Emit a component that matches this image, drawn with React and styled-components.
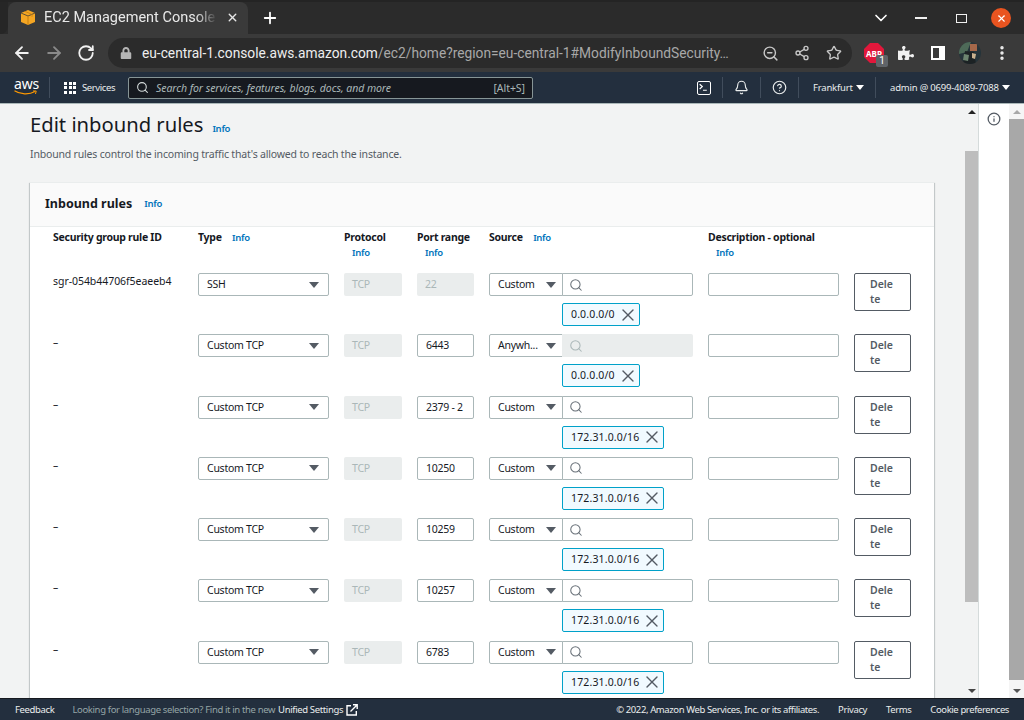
import React from "react";
import styled, { createGlobalStyle } from "styled-components";
import {
  ArrowLeft,
  ArrowRight,
  RotateCw,
  Plus,
  X,
  ChevronDown,
  Search,
  ZoomOut,
  Share2,
  Star,
  EllipsisVertical,
  Bell,
  CircleHelp,
  Info as InfoCircle,
} from "lucide-react";
import { FaPuzzlePiece, FaLock } from "react-icons/fa";

const uiFont = `"Noto Sans", "Open Sans", sans-serif`;
const chromeFont = `Roboto, "Noto Sans", sans-serif`;

const GlobalStyle = createGlobalStyle`
  html, body {
    margin: 0;
    padding: 0;
    height: 100%;
    overflow: hidden;
  }
  * {
    box-sizing: border-box;
  }
`;

const Window = styled.div`
  width: 1024px;
  height: 720px;
  display: flex;
  flex-direction: column;
  overflow: hidden;
  font-family: ${uiFont};
  background: #f2f3f3;
`;

const TabStrip = styled.div`
  height: 34px;
  flex: none;
  display: flex;
  align-items: flex-end;
  background: #2b2b2b;
  border-top: 2px solid #242424;
  color: #fff;
`;

const TabEdge = styled.div`
  width: 8px;
  height: 32px;
  background: #262626;
  border-bottom-right-radius: 8px;
`;

const Tab = styled.div`
  width: 240px;
  height: 32px;
  padding: 0 0 2px 13px;
  display: flex;
  align-items: center;
  gap: 9px;
  background: #3a3a3a;
  border-radius: 8px 8px 0 0;
  font: 14.5px ${chromeFont};
  color: #e8e8e8;
`;

const TabTitle = styled.span`
  width: 173px;
  overflow: hidden;
  white-space: nowrap;
  mask-image: linear-gradient(to right, #000 88%, transparent 100%);
`;

const TabClose = styled.span`
  display: flex;
  color: #e8e8e8;
`;

const NewTab = styled.span`
  display: flex;
  margin: 0 0 1px 13px;
  align-self: center;
`;

const WindowControls = styled.div`
  margin-left: auto;
  align-self: center;
  display: flex;
  align-items: center;
  padding-right: 3px;
`;

const WindowButton = styled.span`
  width: 40px;
  display: flex;
  justify-content: center;
  align-items: center;
`;

const CloseCircle = styled.span`
  width: 20px;
  height: 20px;
  border-radius: 50%;
  background: #e95420;
  display: flex;
  align-items: center;
  justify-content: center;
`;

const MinimizeMark = styled.span`
  width: 12px;
  height: 2px;
  background: #f0f0f0;
`;

const MaximizeMark = styled.span`
  width: 11px;
  height: 9px;
  border: 1.5px solid #f0f0f0;
`;

const Toolbar = styled.div`
  height: 38px;
  flex: none;
  display: flex;
  align-items: center;
  padding: 0 6px;
  background: #3a3a3a;
  color: #e8e8e8;
`;

const ToolButton = styled.span`
  width: 32px;
  flex: none;
  display: flex;
  justify-content: center;
  align-items: center;
  position: relative;
  color: ${(p) => (p.$dim ? "#8a8a8a" : "#f1f1f1")};
`;

const Omnibox = styled.div`
  width: 744px;
  height: 30px;
  margin: 0 6px;
  padding: 0 2px 0 11px;
  flex: none;
  display: flex;
  align-items: center;
  border-radius: 15px;
  background: #2b2b2b;
  font: 13.75px ${chromeFont};
`;

const LockSlot = styled.span`
  display: flex;
  width: 23px;
  padding-left: 1px;
  color: #b5b5b5;
`;

const UrlText = styled.div`
  flex: 1;
  min-width: 0;
  white-space: nowrap;
  color: #a8a8a8;
  b {
    font-weight: 400;
    color: #eeeeee;
  }
`;

const AbpIcon = styled.span`
  width: 20px;
  height: 20px;
  background: #e2173b;
  clip-path: polygon(30% 0, 70% 0, 100% 30%, 100% 70%, 70% 100%, 30% 100%, 0 70%, 0 30%);
  display: flex;
  align-items: center;
  justify-content: center;
  font: bold 8px ${uiFont};
  color: #fff;
`;

const AbpBadge = styled.span`
  position: absolute;
  left: 18px;
  top: 12px;
  width: 12px;
  height: 12px;
  border-radius: 2px;
  background: #5f6368;
  color: #fff;
  font: 10px/12px ${chromeFont};
  text-align: center;
`;

const SidePanelIcon = styled.span`
  width: 14px;
  height: 14px;
  background: #fff;
  border: 2px solid #fff;
  display: flex;
  justify-content: flex-start;
  span {
    width: 6px;
    height: 10px;
    background: #3a3a3a;
  }
`;

const TopNav = styled.div`
  height: 32px;
  flex: none;
  display: flex;
  align-items: center;
  background: #232f3e;
  border-bottom: 1px solid #aab7b8;
  color: #eaeded;
  font-size: 9.5px;
  letter-spacing: -0.2px;
`;

const AwsLogo = styled.div`
  width: 50px;
  height: 21px;
  padding-left: 14px;
  display: flex;
  flex-direction: column;
  border-right: 1px solid #414d5c;
  color: #fff;
  font: 14px/13px ${uiFont};
`;

const ServicesMenu = styled.div`
  display: flex;
  align-items: center;
  gap: 6px;
  padding-left: 14px;
  width: 78px;
  letter-spacing: -0.4px;
`;

const WaffleGrid = styled.span`
  width: 12px;
  height: 12px;
  display: grid;
  grid-template-columns: repeat(3, 3px);
  grid-auto-rows: 3px;
  gap: 1.5px;
  span {
    background: #fff;
  }
`;

const SearchBar = styled.div`
  width: 405px;
  height: 22px;
  display: flex;
  align-items: center;
  padding: 0 7px;
  gap: 7px;
  background: #16191f;
  border: 1px solid #879596;
  border-radius: 2px;
  color: #aab7b8;
  font-size: 10.5px;
  letter-spacing: -0.05px;
  i {
    flex: 1;
  }
`;

const NavRight = styled.div`
  margin-left: auto;
  display: flex;
  align-items: center;
`;

const NavItem = styled.div`
  height: 21px;
  padding: ${(p) => p.$pad || "0"};
  width: ${(p) => p.$width || "38px"};
  display: flex;
  align-items: center;
  justify-content: ${(p) => (p.$text ? "flex-start" : "center")};
  gap: 3px;
  white-space: nowrap;
  border-right: ${(p) => (p.$last ? "none" : "1px solid #414d5c")};
`;

const Caret = styled.span`
  display: inline-block;
  flex: none;
  width: 0;
  height: 0;
  border-left: ${(p) => p.$size || 5}px solid transparent;
  border-right: ${(p) => p.$size || 5}px solid transparent;
  border-top: ${(p) => (p.$size ? p.$size + 1 : 6)}px solid ${(p) => p.$color || "#545b64"};
`;

const TerminalBox = styled.span`
  width: 14px;
  height: 14px;
  border: 1.5px solid #fff;
  border-radius: 2px;
  display: flex;
`;

const Body = styled.div`
  flex: 1;
  min-height: 0;
  display: flex;
`;

const MainPane = styled.main`
  width: 965px;
  overflow: hidden;
  padding: 7px 31px 0 30px;
  color: #16191f;
`;

const TitleRow = styled.div`
  display: flex;
  align-items: baseline;
  gap: 9px;
`;

const PageTitle = styled.h1`
  margin: 0;
  font-size: 20.2px;
  line-height: 26px;
  font-weight: 400;
  color: #16191f;
`;

const InfoLink = styled.a`
  display: ${(p) => (p.$inline ? "inline-block" : "inline")};
  margin-left: ${(p) => (p.$inline ? "8px" : "0")};
  font-size: 9.5px;
  font-weight: 600;
  letter-spacing: -0.3px;
  color: #0073bb;
`;

const PageHint = styled.p`
  margin: 9px 0 0;
  font-size: 10.5px;
  line-height: 16px;
  letter-spacing: -0.18px;
  color: #545b64;
`;

const Card = styled.section`
  margin-top: 20px;
  background: #fff;
  box-shadow: 0 1px 1px 0 rgba(0, 28, 36, 0.3), 1px 1px 1px 0 rgba(0, 28, 36, 0.15),
    -1px 1px 1px 0 rgba(0, 28, 36, 0.15);
  border-top: 1px solid #eaeded;
`;

const CardHeader = styled.div`
  height: 44px;
  padding: 0 0 2px 15px;
  display: flex;
  align-items: center;
  gap: 12px;
  background: #fafafa;
  border-bottom: 1px solid #eaeded;
`;

const CardTitle = styled.h2`
  margin: 0;
  font-size: 12.5px;
  font-weight: 700;
  color: #16191f;
`;

const RuleGrid = styled.div`
  padding: 0 23px;
  display: grid;
  grid-template-columns: 130px 131px 58px 57px 204px 131px 57px;
  column-gap: 15px;
  grid-auto-rows: 61.25px;
  font-size: 10.5px;
  line-height: 15px;
`;

const HeaderGrid = styled(RuleGrid)`
  padding-top: 3px;
  grid-auto-rows: 43px;
`;

const HeadCell = styled.div`
  font-weight: 700;
  line-height: 15px;
  font-size: 10.5px;
  letter-spacing: -0.28px;
`;

const IdCell = styled.div`
  color: #16191f;
  line-height: 16px;
  letter-spacing: -0.05px;
`;

const FieldBox = styled.div`
  height: 23px;
  display: flex;
  align-items: center;
  padding: 0 8px;
  border: 1px solid #aab7b8;
  border-radius: 2px;
  background: #fff;
  white-space: nowrap;
  letter-spacing: -0.25px;
  color: #16191f;
  overflow: hidden;
`;

const SelectBox = styled(FieldBox)`
  justify-content: space-between;
  padding-right: 9px;
`;

const DisabledBox = styled(FieldBox)`
  border: none;
  background: #eaeded;
  color: #aab7b8;
`;

const SourceRow = styled.div`
  display: flex;
`;

const SourceSelect = styled(SelectBox)`
  width: 74px;
  flex: none;
  padding-right: 6px;
  border-radius: 2px 0 0 2px;
  gap: 4px;
`;

const SourceSearch = styled(FieldBox)`
  flex: 1;
  margin-left: -1px;
  padding-left: 6px;
  border-radius: 0 2px 2px 0;
  ${(p) => p.$off && "border: none; background: #eaeded; padding-left: 7px;"}
`;

const Token = styled.div`
  width: fit-content;
  height: 23px;
  margin: 7px 0 0 73px;
  padding: 0 1px 0 8px;
  display: flex;
  align-items: center;
  gap: 3px;
  background: #f1faff;
  border: 1px solid #00a1c9;
  border-radius: 2px;
  letter-spacing: 0.15px;
  color: #16191f;
  svg {
    color: #545b64;
  }
`;

const DeleteButton = styled.button`
  display: block;
  width: 57px;
  height: 38px;
  padding: 3px 15px;
  background: #fff;
  border: 1px solid #545b64;
  border-radius: 2px;
  font: 600 10.5px/15px ${uiFont};
  color: #545b64;
  text-align: left;
  word-break: break-all;
`;

const Scrollbar = styled.div`
  width: ${(p) => p.$width}px;
  flex: none;
  display: flex;
  flex-direction: column;
  align-items: stretch;
  background: ${(p) => p.$bg};
`;

const ScrollArrow = styled.span`
  height: 15px;
  flex: none;
  display: flex;
  align-items: center;
  justify-content: center;
  margin-top: ${(p) => (p.$down ? "auto" : "0")};
  &::after {
    content: "";
    border-left: 4px solid transparent;
    border-right: 4px solid transparent;
    ${(p) =>
      p.$down
        ? `border-top: 4px solid ${p.$color};`
        : `border-bottom: 4px solid ${p.$color};`}
  }
`;

const ScrollThumb = styled.div`
  height: ${(p) => p.$height}px;
  margin-top: ${(p) => p.$top}px;
  background: ${(p) => p.$color};
`;

const SidePanel = styled.aside`
  flex: 1;
  display: flex;
  background: #fff;
  border-left: 1px solid #d5dbdb;
`;

const SideIcons = styled.div`
  flex: 1;
  padding-top: 8px;
  display: flex;
  justify-content: center;
  color: #545b64;
`;

const Footer = styled.footer`
  height: 22px;
  flex: none;
  display: flex;
  align-items: center;
  padding: 0 15px;
  background: #232f3e;
  border-top: 1px solid #16191f;
  color: #eaeded;
  font-size: 9.5px;
  letter-spacing: -0.36px;
  white-space: nowrap;
`;

const FooterNote = styled.span`
  margin-left: 18px;
  color: #95a5a6;
  display: flex;
  align-items: center;
  gap: 3px;
  b {
    font-weight: 400;
    color: #eaeded;
  }
`;

const FooterLinks = styled.div`
  margin-left: auto;
  display: flex;
  gap: 19px;
  letter-spacing: -0.4px;
`;

const rules = [
  { id: "sgr-054b44706f5eaeeb4", type: "SSH", port: "22", portOff: true, source: "Custom", cidr: "0.0.0.0/0" },
  { id: "–", type: "Custom TCP", port: "6443", source: "Anywh...", off: true, cidr: "0.0.0.0/0" },
  { id: "–", type: "Custom TCP", port: "2379 - 2", source: "Custom", cidr: "172.31.0.0/16" },
  { id: "–", type: "Custom TCP", port: "10250", source: "Custom", cidr: "172.31.0.0/16" },
  { id: "–", type: "Custom TCP", port: "10259", source: "Custom", cidr: "172.31.0.0/16" },
  { id: "–", type: "Custom TCP", port: "10257", source: "Custom", cidr: "172.31.0.0/16" },
  { id: "–", type: "Custom TCP", port: "6783", source: "Custom", cidr: "172.31.0.0/16" },
];

const Favicon = () => (
  <svg width="14" height="15" viewBox="0 0 14 15">
    <path d="M0 3l7-3 7 3v9l-7 3-7-3z" fill="#f5a623" />
    <path d="M0 3l7 3 7-3" fill="none" stroke="#3a3a3a" strokeWidth="0.8" />
    <path d="M7 6v9" stroke="#c47f12" strokeWidth="1" />
    <path d="M4 1.4l7 3v2.4" fill="none" stroke="#c47f12" strokeWidth="0.8" />
  </svg>
);

const Avatar = () => (
  <svg width="22" height="22" viewBox="0 0 22 22">
    <defs>
      <clipPath id="avatar-clip">
        <circle cx="11" cy="11" r="11" />
      </clipPath>
    </defs>
    <g clipPath="url(#avatar-clip)">
      <rect width="22" height="22" fill="#26343a" />
      <path d="M0 0h12l-4 10-8 2z" fill="#4e6a58" />
      <path d="M11 2h7v7h-7z" fill="#a5684a" />
      <path d="M6 9l9 1 2 12H4z" fill="#1c2224" />
      <path d="M5 12l5 1-1 6-5-1z" fill="#6d8570" />
      <path d="M13 11l4 1-1 5-3-1z" fill="#c9b18f" />
    </g>
  </svg>
);

const ExternalIcon = () => (
  <svg width="12" height="12" viewBox="0 0 12 12" fill="none" stroke="#fff" strokeWidth="1.4">
    <path d="M5 1.7H1v9.3h9.3V7" />
    <path d="M4.5 7.5L11 1M7 .8h4.2V5" />
  </svg>
);

const AwsSmile = () => (
  <svg width="24" height="6" viewBox="0 0 24 6" fill="none" stroke="#ff9900" strokeWidth="1.2">
    <path d="M0.5 0.8C6 4.5 15 5 21 1.6" />
    <path d="M19 1h3.2l-.7 3" strokeWidth="1" />
  </svg>
);

const RuleRow = ({ rule }) => (
  <>
    <IdCell>{rule.id}</IdCell>
    <div>
      <SelectBox>
        {rule.type}
        <Caret />
      </SelectBox>
    </div>
    <div>
      <DisabledBox>TCP</DisabledBox>
    </div>
    <div>{rule.portOff ? <DisabledBox>{rule.port}</DisabledBox> : <FieldBox>{rule.port}</FieldBox>}</div>
    <div>
      <SourceRow>
        <SourceSelect>
          {rule.source}
          <Caret />
        </SourceSelect>
        <SourceSearch $off={rule.off}>
          <Search size={14} strokeWidth={1.8} color={rule.off ? "#aab7b8" : "#687078"} />
        </SourceSearch>
      </SourceRow>
      <Token>
        {rule.cidr}
        <X size={20} strokeWidth={1.6} />
      </Token>
    </div>
    <div>
      <FieldBox />
    </div>
    <div>
      <DeleteButton>Delete</DeleteButton>
    </div>
  </>
);

export default function App() {
  return (
    <Window>
      <GlobalStyle />
      <TabStrip>
        <TabEdge />
        <Tab>
          <Favicon />
          <TabTitle>EC2 Management Console</TabTitle>
          <TabClose>
            <X size={13} strokeWidth={2.6} />
          </TabClose>
        </Tab>
        <NewTab>
          <Plus size={18} strokeWidth={2.4} />
        </NewTab>
        <WindowControls>
          <WindowButton>
            <ChevronDown size={20} strokeWidth={2} />
          </WindowButton>
          <WindowButton>
            <MinimizeMark />
          </WindowButton>
          <WindowButton>
            <MaximizeMark />
          </WindowButton>
          <WindowButton>
            <CloseCircle>
              <X size={11} strokeWidth={2.4} />
            </CloseCircle>
          </WindowButton>
        </WindowControls>
      </TabStrip>

      <Toolbar>
        <ToolButton>
          <ArrowLeft size={20} strokeWidth={2.2} />
        </ToolButton>
        <ToolButton $dim>
          <ArrowRight size={20} strokeWidth={2.2} />
        </ToolButton>
        <ToolButton>
          <RotateCw size={18} strokeWidth={2.4} />
        </ToolButton>
        <Omnibox>
          <LockSlot>
            <FaLock size={12} />
          </LockSlot>
          <UrlText>
            <b>eu-central-1.console.aws.amazon.com</b>/ec2/home?region=eu-central-1#ModifyInboundSecurity…
          </UrlText>
          <ToolButton>
            <ZoomOut size={17} strokeWidth={2} color="#c8c8c8" />
          </ToolButton>
          <ToolButton>
            <Share2 size={16} strokeWidth={2} color="#c8c8c8" />
          </ToolButton>
          <ToolButton>
            <Star size={16} strokeWidth={2} color="#c8c8c8" />
          </ToolButton>
        </Omnibox>
        <ToolButton>
          <AbpIcon>ABP</AbpIcon>
          <AbpBadge>1</AbpBadge>
        </ToolButton>
        <ToolButton>
          <FaPuzzlePiece size={16} />
        </ToolButton>
        <ToolButton>
          <SidePanelIcon>
            <span />
          </SidePanelIcon>
        </ToolButton>
        <ToolButton>
          <Avatar />
        </ToolButton>
        <ToolButton>
          <EllipsisVertical size={18} strokeWidth={2.6} />
        </ToolButton>
      </Toolbar>

      <TopNav>
        <AwsLogo>
          aws
          <AwsSmile />
        </AwsLogo>
        <ServicesMenu>
          <WaffleGrid>
            {Array.from({ length: 9 }).map((_, i) => (
              <span key={i} />
            ))}
          </WaffleGrid>
          Services
        </ServicesMenu>
        <SearchBar>
          <Search size={13} strokeWidth={2} color="#d5dbdb" />
          <i>Search for services, features, blogs, docs, and more</i>
          <span>[Alt+S]</span>
        </SearchBar>
        <NavRight>
          <NavItem>
            <TerminalBox>
              <svg width="11" height="11" viewBox="0 0 10 10" fill="none" stroke="#fff" strokeWidth="1.1">
                <path d="M1.5 2l2.4 2.2L1.5 6.4M4.5 7.5H8" />
              </svg>
            </TerminalBox>
          </NavItem>
          <NavItem>
            <Bell size={15} strokeWidth={1.8} />
          </NavItem>
          <NavItem>
            <CircleHelp size={15} strokeWidth={1.9} />
          </NavItem>
          <NavItem $text $width="77px" $pad="0 0 0 14px">
            Frankfurt
            <Caret $size={4} $color="#fff" />
          </NavItem>
          <NavItem $text $last $width="148px" $pad="0 0 0 14px">
            admin @ 0699-4089-7088
            <Caret $size={4} $color="#fff" />
          </NavItem>
        </NavRight>
      </TopNav>

      <Body>
        <MainPane>
          <TitleRow>
            <PageTitle>Edit inbound rules</PageTitle>
            <InfoLink>Info</InfoLink>
          </TitleRow>
          <PageHint>Inbound rules control the incoming traffic that's allowed to reach the instance.</PageHint>
          <Card>
            <CardHeader>
              <CardTitle>Inbound rules</CardTitle>
              <InfoLink>Info</InfoLink>
            </CardHeader>
            <HeaderGrid>
              <HeadCell>Security group rule ID</HeadCell>
              <HeadCell>
                Type <InfoLink $inline>Info</InfoLink>
              </HeadCell>
              <HeadCell>
                Protocol <InfoLink $inline>Info</InfoLink>
              </HeadCell>
              <HeadCell>
                Port range <InfoLink $inline>Info</InfoLink>
              </HeadCell>
              <HeadCell>
                Source <InfoLink $inline>Info</InfoLink>
              </HeadCell>
              <HeadCell>
                Description - optional <InfoLink $inline>Info</InfoLink>
              </HeadCell>
              <div />
            </HeaderGrid>
            <RuleGrid>
              {rules.map((rule, i) => (
                <RuleRow key={i} rule={rule} />
              ))}
            </RuleGrid>
          </Card>
        </MainPane>
        <Scrollbar $width={13} $bg="#f2f3f3">
          <ScrollArrow $color="#222" />
          <ScrollThumb $top={32} $height={451} $color="#bdbdbd" />
          <ScrollArrow $down $color="#444" />
        </Scrollbar>
        <SidePanel>
          <SideIcons>
            <InfoCircle size={14} strokeWidth={2.2} />
          </SideIcons>
          <Scrollbar $width={15} $bg="#f5f5f5">
            <ScrollArrow $color="#a8a8a8" />
            <ScrollThumb $top={0} $height={561} $color="#a8a8a8" />
            <ScrollArrow $down $color="#555" />
          </Scrollbar>
        </SidePanel>
      </Body>

      <Footer>
        Feedback
        <FooterNote>
          Looking for language selection? Find it in the new <b>Unified Settings</b>
          <ExternalIcon />
        </FooterNote>
        <FooterLinks>
          <span>© 2022, Amazon Web Services, Inc. or its affiliates.</span>
          <span>Privacy</span>
          <span>Terms</span>
          <span>Cookie preferences</span>
        </FooterLinks>
      </Footer>
    </Window>
  );
}
